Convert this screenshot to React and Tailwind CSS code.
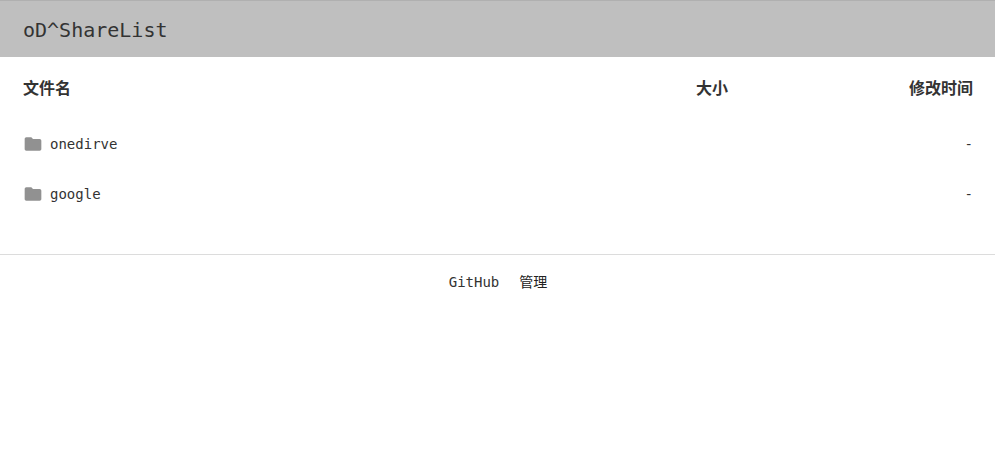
import React from "react";

const mono = "font-['DejaVu_Sans_Mono','Noto_Sans_CJK_SC',monospace]";

const folders = ["onedirve", "google"];

const FolderIcon = () => (
  <svg viewBox="0 0 24 24" className="w-5 h-5 mr-[7px] shrink-0" fill="#919191">
    <path d="M10 4H4c-1.1 0-1.99.9-1.99 2L2 18c0 1.1.9 2 2 2h16c1.1 0 2-.9 2-2V8c0-1.1-.9-2-2-2h-8l-2-2z" />
  </svg>
);

export default function App() {
  return (
    <div className={`min-h-[466px] bg-white text-[#333] ${mono}`}>
      <header className="h-[57px] flex items-center px-[23px] pt-[1px] bg-[#bfbfbf] border-t border-[#b0b0b0]">
        <span className="text-[20px] text-[#333]">oD^ShareList</span>
      </header>

      <main className="px-[22px] border-b border-[#dcdcdc] pb-[35px]">
        <div className="flex items-center h-[62px] pb-[2px] text-[16px] font-bold font-['Noto_Sans_CJK_SC',sans-serif]">
          <div className="flex-1 pl-[1px]">文件名</div>
          <div className="w-[177px]">大小</div>
          <div className="w-[100px] text-right">修改时间</div>
        </div>
        {folders.map((name) => (
          <div key={name} className="flex items-center h-[50px] text-[14px]">
            <div className="flex-1 flex items-center pl-[1px]">
              <FolderIcon />
              <span>{name}</span>
            </div>
            <div className="w-[100px] text-right">-</div>
          </div>
        ))}
      </main>

      <footer className="flex justify-center items-center gap-5 h-[55px] pl-[1px] text-[14px] text-[#333]">
        <a>GitHub</a>
        <a className="text-[#222] -mt-[2px] font-['Noto_Sans_CJK_SC',sans-serif]">管理</a>
      </footer>
    </div>
  );
}
